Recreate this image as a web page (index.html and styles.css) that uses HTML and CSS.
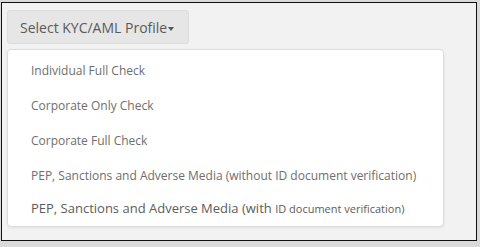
FILE: index.html
```html
<!DOCTYPE html>
<html lang="en">
<head>
    <meta charset="UTF-8">
    <title>KYC/AML Profile</title>
    <link rel="stylesheet" href="styles.css">
</head>
<body>
    <div class="frame">
        <div class="dropdown">
            <button class="dropdown-btn">Select KYC/AML Profile<span class="caret"></span></button>
            <ul class="dropdown-menu">
                <li>Individual Full Check</li>
                <li>Corporate Only Check</li>
                <li>Corporate Full Check</li>
                <li>PEP, Sanctions and Adverse Media (without ID document verification)</li>
                <li class="last">PEP, Sanctions and Adverse Media (with <small>ID document verification)</small></li>
            </ul>
        </div>
    </div>
</body>
</html>
```

FILE: styles.css
```css
html, body {
    margin: 0;
    padding: 0;
}
body {
    font-family: 'Open Sans', 'Noto Sans', sans-serif;
    background-color: #dadada;
    width: 480px;
    height: 247px;
    padding-top: 2px;
    box-sizing: border-box;
}
.frame {
    margin-left: 1px;
    width: 476px;
    height: 239px;
    box-sizing: border-box;
    border: 1px solid #111;
    background-color: #f2f2f2;
    padding: 7px 0 0 5px;
}
.dropdown-btn {
    font-family: inherit;
    font-size: 14px;
    color: #5a5a5a;
    background-color: #e6e6e6;
    border: 1px solid #dcdcdc;
    border-radius: 3px;
    height: 34px;
    width: 182px;
    padding: 0 0 0 12px;
    text-align: left;
    cursor: pointer;
}
.caret {
    display: inline-block;
    width: 0;
    height: 0;
    margin-left: 1px;
    vertical-align: middle;
    border-top: 4px solid #555;
    border-left: 3px solid transparent;
    border-right: 3px solid transparent;
}
.dropdown-menu {
    list-style: none;
    margin: 5px 0 0;
    padding: 3px 0 0;
    width: 437px;
    height: 178px;
    box-sizing: border-box;
    background-color: #fff;
    border: 1px solid #dcdce2;
    border-radius: 4px;
    box-shadow: 0 1px 3px rgba(0,0,0,0.08);
    overflow: hidden;
}
.dropdown-menu li {
    font-size: 12px;
    color: #6e6e6e;
    height: 35px;
    line-height: 35px;
    padding-left: 23px;
    white-space: nowrap;
}
.dropdown-menu li.last {
    font-size: 13px;
    color: #5c5c5c;
    height: 30px;
    line-height: 30px;
}
.dropdown-menu li.last small {
    font-size: 11px;
}
```
